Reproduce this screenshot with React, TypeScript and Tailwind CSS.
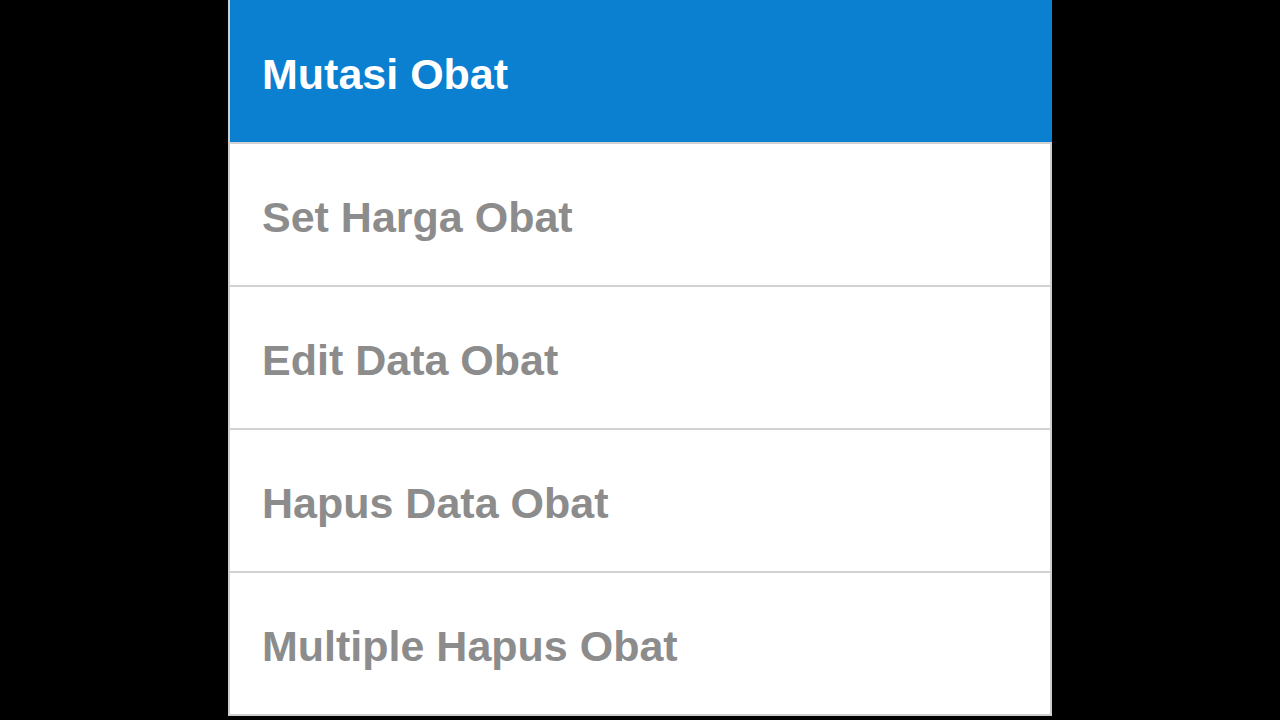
import React from 'react';

const ITEMS = ['Set Harga Obat', 'Edit Data Obat', 'Hapus Data Obat', 'Multiple Hapus Obat'];

export default function App() {
  return (
    <div className="w-[1280px] h-[720px] bg-black flex justify-center overflow-hidden" style={{ fontFamily: '"Liberation Sans", Arial, sans-serif' }}>
      <div className="w-[824px] h-[716px] flex flex-col bg-white border-l-2 border-r-2 border-b-2 border-[#cfcfcf]">
        <div className="h-[142px] shrink-0 bg-[#0b80d1] flex items-center pl-[32px] -mr-[2px]">
          <span className="text-white font-bold text-[43px] leading-none pt-[6px]">Mutasi Obat</span>
        </div>
        {ITEMS.map((label) => (
          <div key={label} className="h-[143px] shrink-0 border-t-2 border-[#d2d2d2] flex items-center pl-[32px]">
            <span className="text-[#8c8c8c] font-bold text-[43px] leading-none pt-[6px]">{label}</span>
          </div>
        ))}
      </div>
    </div>
  );
}
